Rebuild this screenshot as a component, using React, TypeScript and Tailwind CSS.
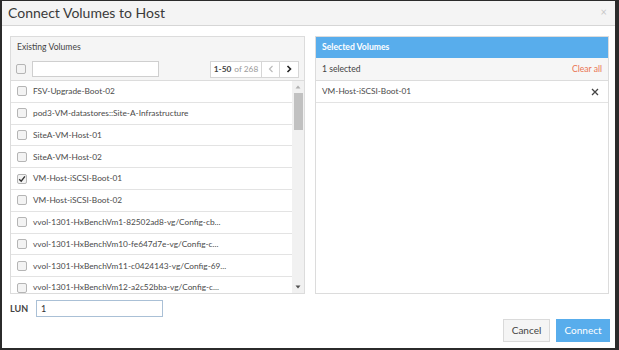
import React from 'react';

const volumes = [
    { name: 'FSV-Upgrade-Boot-02', checked: false },
    { name: 'pod3-VM-datastores::Site-A-Infrastructure', checked: false },
    { name: 'SiteA-VM-Host-01', checked: false },
    { name: 'SiteA-VM-Host-02', checked: false },
    { name: 'VM-Host-iSCSI-Boot-01', checked: true },
    { name: 'VM-Host-iSCSI-Boot-02', checked: false },
    { name: 'vvol-1301-HxBenchVm1-82502ad8-vg/Config-cb...', checked: false },
    { name: 'vvol-1301-HxBenchVm10-fe647d7e-vg/Config-c...', checked: false },
    { name: 'vvol-1301-HxBenchVm11-c0424143-vg/Config-69...', checked: false },
    { name: 'vvol-1301-HxBenchVm12-a2c52bba-vg/Config-c...', checked: false },
];

const Checkbox: React.FC<{ checked?: boolean }> = ({ checked }) => (
    <span className="w-[10px] h-[10px] shrink-0 rounded-[2px] border border-[#b5b5b5] bg-[#f3f3f3] flex items-center justify-center">
        {checked && (
            <svg width="8" height="8" viewBox="0 0 8 8">
                <path d="M1.2 4.2 L3.2 6.2 L6.9 1.4" fill="none" stroke="#333" strokeWidth="1.4" />
            </svg>
        )}
    </span>
);

export default function App() {
    return (
        <div
            className="w-[619px] h-[350px] bg-white border-t border-l-2 border-r-4 border-b-2 border-[#2b2b2b] flex flex-col overflow-hidden text-[#333]"
            style={{ fontFamily: 'Lato, "Open Sans", sans-serif' }}
        >
            {/* Header */}
            <div className="h-[25px] shrink-0 bg-[#f4f4f4] border-b border-[#d6d6d6] pl-[6px] pr-[8px] flex items-center justify-between">
                <span className="text-[14px] text-[#3a3a3a] leading-none">Connect Volumes to Host</span>
                <span className="text-[11px] text-[#c8c8c8] leading-none -mt-[4px]">×</span>
            </div>

            {/* Body */}
            <div className="pt-[10px] pl-[8px] pr-[6px] flex gap-[10px]">
                {/* Existing volumes */}
                <div className="w-[296px] h-[258px] border border-[#dcdcdc] flex flex-col overflow-hidden">
                    <div className="bg-[#f5f5f5] border-b border-[#dcdcdc] shrink-0">
                        <div className="h-[21px] px-[6px] flex items-center text-[8.6px] text-[#444]">Existing Volumes</div>
                        <div className="h-[22px] pl-[5px] pr-[5px] flex items-center">
                            <Checkbox />
                            <div className="ml-[6px] w-[127px] h-[16px] bg-white border border-[#cfcfcf]" />
                            <div className="ml-auto h-[17px] flex border border-[#d6d6d6] bg-white text-[8.3px]">
                                <div className="w-[51px] flex items-center justify-center border-r border-[#d6d6d6]">
                                    <span className="font-bold text-[#444]">1-50</span>
                                    <span className="ml-[3px] text-[#999]">of 268</span>
                                </div>
                                <div className="w-[18px] flex items-center justify-center border-r border-[#d6d6d6]">
                                    <svg width="6" height="8" viewBox="0 0 6 8"><path d="M4.5 1 L1.5 4 L4.5 7" fill="none" stroke="#bbb" strokeWidth="1.2" /></svg>
                                </div>
                                <div className="w-[18px] flex items-center justify-center">
                                    <svg width="6" height="8" viewBox="0 0 6 8"><path d="M1.5 1 L4.5 4 L1.5 7" fill="none" stroke="#222" strokeWidth="1.6" /></svg>
                                </div>
                            </div>
                        </div>
                    </div>
                    <div className="flex flex-1 min-h-0">
                        <div className="flex-1 overflow-hidden">
                            {volumes.map((v) => (
                                <div key={v.name} className="h-[21.8px] pl-[6px] flex items-center border-b border-[#e3e3e3] text-[8.3px] text-[#4a4a4a]">
                                    <Checkbox checked={v.checked} />
                                    <span className="ml-[6px] whitespace-nowrap">{v.name}</span>
                                </div>
                            ))}
                        </div>
                        {/* Scrollbar */}
                        <div className="w-[12px] shrink-0 bg-[#f1f1f1] flex flex-col items-center">
                            <div className="h-[12px] flex items-center justify-center">
                                <svg width="6" height="4" viewBox="0 0 6 4"><path d="M0.5 3.5 L3 0.5 L5.5 3.5 Z" fill="#b0b0b0" /></svg>
                            </div>
                            <div className="w-[9px] h-[37px] bg-[#c1c1c1]" />
                            <div className="flex-1" />
                            <div className="h-[12px] flex items-center justify-center">
                                <svg width="6" height="4" viewBox="0 0 6 4"><path d="M0.5 0.5 L3 3.5 L5.5 0.5 Z" fill="#505050" /></svg>
                            </div>
                        </div>
                    </div>
                </div>

                {/* Selected volumes */}
                <div className="w-[295px] h-[258px] border border-[#dcdcdc] flex flex-col overflow-hidden">
                    <div className="h-[21px] bg-[#58adec] px-[6px] flex items-center text-[8.6px] font-bold text-white shrink-0">
                        Selected Volumes
                    </div>
                    <div className="h-[23px] bg-[#f6f6f6] border-b border-[#dcdcdc] px-[6px] flex items-center justify-between text-[8.6px] shrink-0">
                        <span className="text-[#444]">1 selected</span>
                        <span className="text-[#ea7453]">Clear all</span>
                    </div>
                    <div className="h-[22px] border-b border-[#e3e3e3] pl-[6px] pr-[9px] flex items-center justify-between text-[8.3px] text-[#4a4a4a]">
                        <span>VM-Host-iSCSI-Boot-01</span>
                        <svg width="8" height="8" viewBox="0 0 8 8"><path d="M1 1 L7 7 M7 1 L1 7" stroke="#444" strokeWidth="1.3" /></svg>
                    </div>
                </div>
            </div>

            {/* LUN */}
            <div className="mt-[6px] pl-[8px] flex items-center h-[17px]">
                <span className="w-[26px] text-[9px] font-bold text-[#444]">LUN</span>
                <div className="w-[127px] h-[17px] border border-[#aac0d6] bg-white pl-[4px] flex items-center text-[9px] text-[#333]">1</div>
            </div>

            {/* Footer buttons */}
            <div className="mt-[2px] pr-[5px] flex justify-end gap-[6px]">
                <button className="w-[47px] h-[23px] bg-[#f5f5f5] border border-[#dadada] text-[10px] text-[#444]">Cancel</button>
                <button className="w-[54px] h-[23px] bg-[#58adec] border border-[#58adec] text-[10px] text-white">Connect</button>
            </div>
        </div>
    );
}
